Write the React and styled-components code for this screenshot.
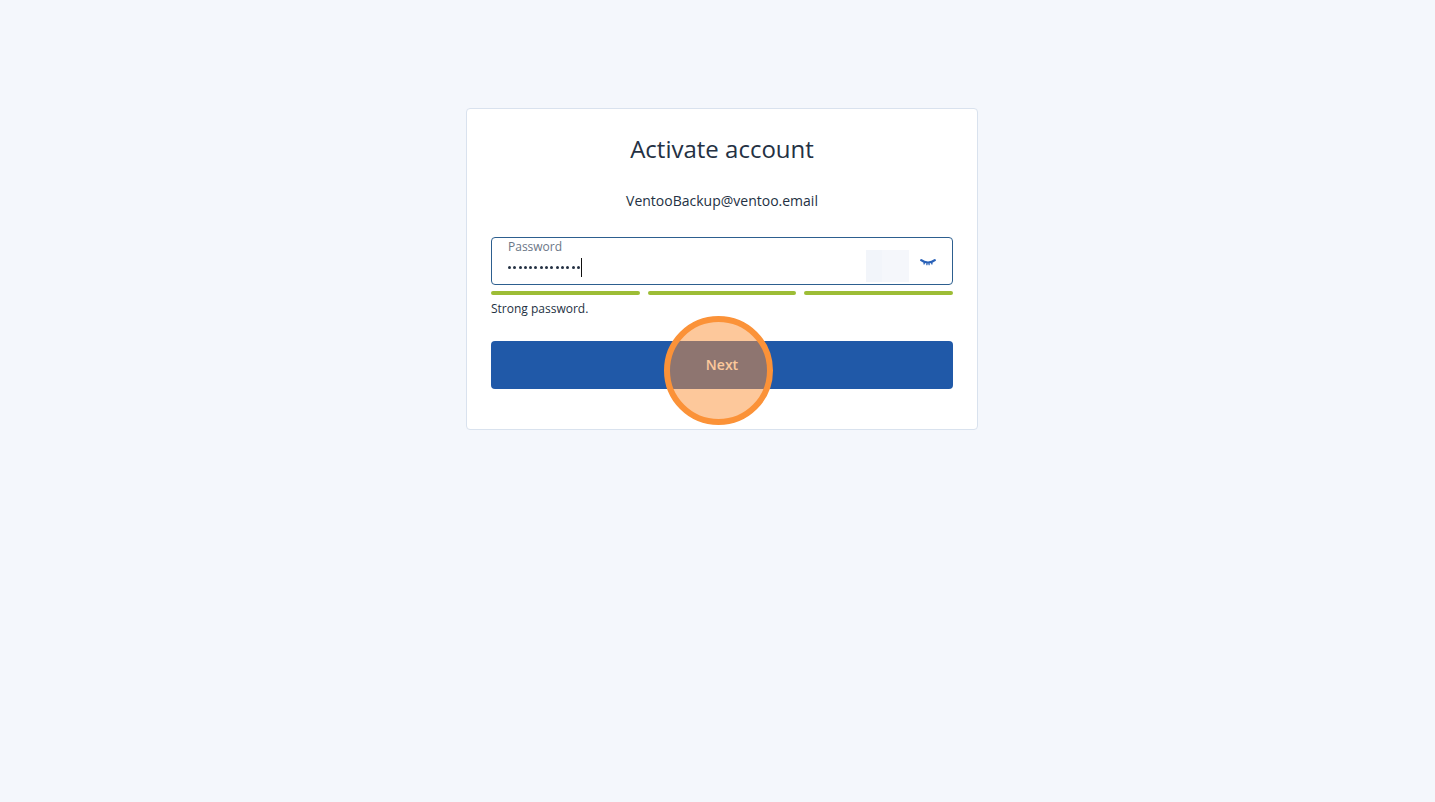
import React from "react";
import styled, { createGlobalStyle } from "styled-components";

const Global = createGlobalStyle`
  html, body {
    margin: 0;
    padding: 0;
    background: #f4f7fc;
    font-family: "Open Sans", "Liberation Sans", sans-serif;
    color: #243143;
  }
`;

const Page = styled.div`
  position: relative;
  width: 100%;
  height: 802px;
  padding-top: 108px;
  box-sizing: border-box;
  display: flex;
  flex-direction: column;
  align-items: center;
  overflow: hidden;
`;

const Card = styled.div`
  box-sizing: border-box;
  width: 512px;
  height: 322px;
  margin-left: 9px;
  padding: 23px 24px 40px;
  background: #fff;
  border: 1px solid #d9e2ee;
  border-radius: 4px;
  display: flex;
  flex-direction: column;
`;

const Title = styled.h1`
  margin: 0;
  height: 34px;
  font-size: 24px;
  line-height: 34px;
  font-weight: 400;
  text-align: center;
`;

const Email = styled.p`
  margin: 24px 0 0;
  height: 22px;
  font-size: 14px;
  line-height: 22px;
  text-align: center;
`;

const Field = styled.div`
  box-sizing: border-box;
  flex: none;
  margin-top: 25px;
  height: 48px;
  padding: 0 16px;
  border: 1px solid #2d5f8f;
  border-radius: 4px;
  display: flex;
  align-items: center;
`;

const FieldBody = styled.div`
  flex: 1;
  align-self: flex-start;
  padding-top: 1px;
  display: flex;
  flex-direction: column;
`;

const Label = styled.label`
  font-size: 12px;
  line-height: 16px;
  color: #6b7686;
`;

const Value = styled.div`
  display: flex;
  align-items: center;
  height: 20px;
  margin-top: 2px;
`;

const Dot = styled.span`
  width: 3px;
  height: 3px;
  margin-right: 2.3px;
  border-radius: 50%;
  background: #243143;
`;

const Caret = styled.span`
  width: 1px;
  height: 19px;
  margin-left: -1px;
  background: #111;
`;

const AutofillBox = styled.div`
  width: 43px;
  height: 32px;
  margin-top: 10px;
  background: linear-gradient(to right, #f2f5fa 16px, #f5f7fb 16px);
`;

const EyeButton = styled.button`
  width: 16px;
  height: 16px;
  margin: 2px 0 0 11px;
  padding: 0;
  border: 0;
  background: none;
  display: flex;
  align-items: center;
  justify-content: center;
`;

const Strength = styled.div`
  flex: none;
  margin-top: 6px;
  display: grid;
  grid-template-columns: repeat(3, 1fr);
  gap: 8px;
`;

const Bar = styled.span`
  height: 4px;
  border-radius: 2px;
  background: #9dbd36;
`;

const Hint = styled.p`
  margin: 5px 0 0;
  height: 17px;
  font-size: 12px;
  line-height: 17px;
`;

const NextButton = styled.button`
  flex: none;
  margin-top: 24px;
  height: 48px;
  padding: 0 0 2px;
  border: 0;
  border-radius: 4px;
  background: #2059a8;
  color: #fff;
  font-family: inherit;
  font-size: 14px;
  font-weight: 600;
`;

const ClickMarker = styled.div`
  position: absolute;
  left: 664px;
  top: 316px;
  box-sizing: border-box;
  width: 109px;
  height: 109px;
  border: 6px solid #fb9238;
  border-radius: 50%;
  background: rgba(252, 146, 56, 0.5);
`;

export default function App() {
  return (
    <Page>
      <Global />
      <Card>
        <Title>Activate account</Title>
        <Email>VentooBackup@ventoo.email</Email>
        <Field>
          <FieldBody>
            <Label>Password</Label>
            <Value>
              {Array.from({ length: 14 }, (_, i) => (
                <Dot key={i} />
              ))}
              <Caret />
            </Value>
          </FieldBody>
          <AutofillBox />
          <EyeButton aria-label="Show password">
            <svg width="16" height="10" viewBox="0 0 16 10" fill="none" stroke="#2a62b8" strokeLinecap="round">
              <path d="M1.2 3.2c2 1.6 4.2 2.3 6.8 2.3s4.800-.7 6.800-2.300" strokeWidth="2.200" />
              <path d="M4.500 5.500 4 7M7 6.200l-.1 1.500M9 6.200l.1 1.500M11.500 5.500l.5 1.500" strokeWidth="1.300" />
            </svg>
          </EyeButton>
        </Field>
        <Strength>
          <Bar />
          <Bar />
          <Bar />
        </Strength>
        <Hint>Strong password.</Hint>
        <NextButton>Next</NextButton>
      </Card>
      <ClickMarker />
    </Page>
  );
}
